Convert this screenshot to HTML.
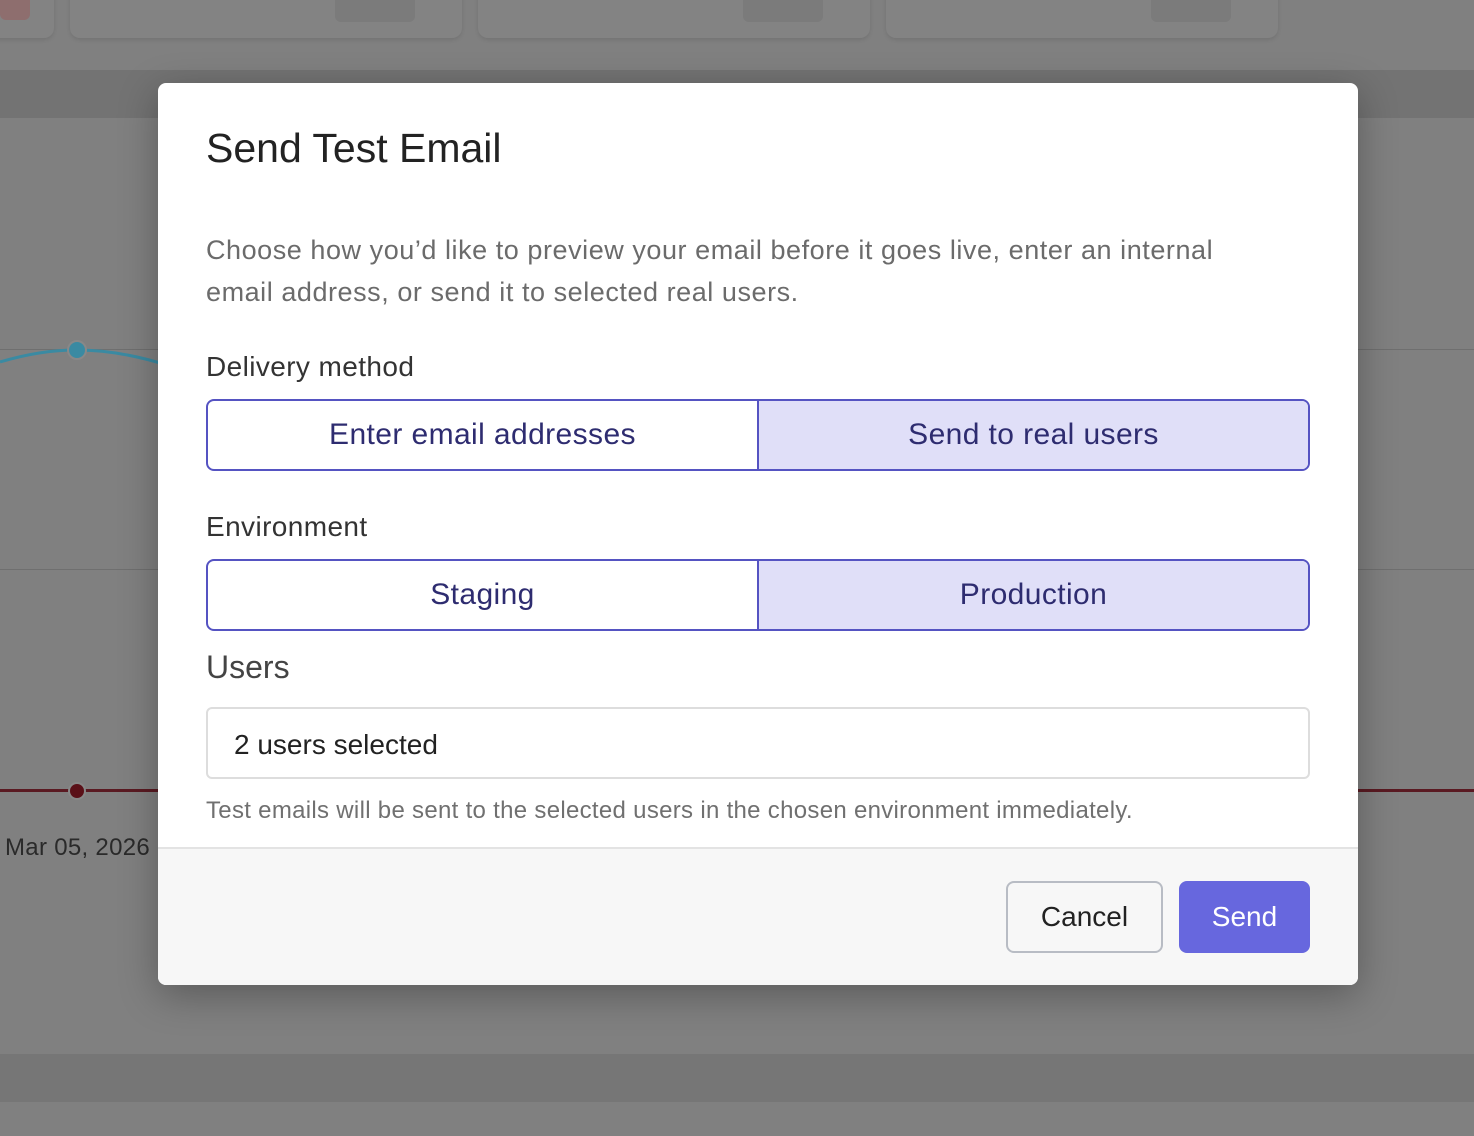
<!DOCTYPE html>
<html><head><meta charset="utf-8"><style>
*{box-sizing:border-box;margin:0;padding:0}
body{width:1474px;height:1136px;overflow:hidden;background:#808080;font-family:"Liberation Sans","DejaVu Sans",sans-serif;position:relative}
.abs{position:absolute}
.card{position:absolute;top:-20px;height:58px;border-radius:10px;background:#838383;box-shadow:0 2px 4px rgba(0,0,0,.1)}
.modal{position:absolute;left:158px;top:83px;width:1200px;height:902px;background:#fff;border-radius:8px;overflow:hidden;box-shadow:0 10px 40px rgba(0,0,0,.3)}
.t{position:absolute;left:48px}
.seg{position:absolute;left:48px;width:1104px;height:72px;border:2px solid #5553c2;border-radius:8px;display:flex;overflow:hidden}
.seg div{flex:1;display:flex;align-items:center;justify-content:center;color:#2e2c70;font-size:30px;letter-spacing:0.4px}
.seg div+div{background:#e0dff8;border-left:2px solid #5553c2}
</style></head><body>
<div class="card" style="left:-30px;width:84px"></div>
<div class="abs" style="left:0;top:-20px;width:30px;height:40px;background:#8e6e6e;border-radius:6px"></div>
<div class="card" style="left:70px;width:392px"></div>
<div class="card" style="left:478px;width:392px"></div>
<div class="card" style="left:886px;width:392px"></div>
<div class="abs" style="left:335px;top:-10px;width:80px;height:32px;background:#7b7b7b;border-radius:6px"></div>
<div class="abs" style="left:743px;top:-10px;width:80px;height:32px;background:#7b7b7b;border-radius:6px"></div>
<div class="abs" style="left:1151px;top:-10px;width:80px;height:32px;background:#7b7b7b;border-radius:6px"></div>
<div class="abs" style="left:0;top:70px;width:1474px;height:48px;background:#737373"></div>
<div class="abs" style="left:0;top:349px;width:1474px;height:1px;background:#6f6f6f"></div>
<div class="abs" style="left:0;top:569px;width:1474px;height:1px;background:#6f6f6f"></div>
<div class="abs" style="left:0;top:789px;width:1474px;height:3px;background:#5a1a22"></div>
<div class="abs" style="left:68px;top:782px;width:18px;height:18px;border-radius:50%;background:#5a1018;border:2px solid #888"></div>
<svg class="abs" style="left:0;top:330px" width="170" height="40"><path d="M0 32 Q40 20 77 20 Q120 20 170 36" stroke="#3a8aa2" stroke-width="3" fill="none"/><circle cx="77" cy="20" r="9" fill="#3a8aa2" stroke="#888" stroke-width="2"/></svg>
<div class="abs" style="left:5px;top:834px;font-size:24px;color:#2a2a2a;letter-spacing:0.3px">Mar 05, 2026</div>
<div class="abs" style="left:0;top:1054px;width:1474px;height:48px;background:#767676"></div>
<div class="modal">
<div class="t" style="top:42px;font-size:41px;color:#222">Send Test Email</div>
<div class="t" style="top:146px;font-size:27px;line-height:42px;color:#6b6b6b;width:1070px;letter-spacing:0.55px">Choose how you’d like to preview your email before it goes live, enter an internal email address, or send it to selected real users.</div>
<div class="t" style="top:268px;font-size:28px;color:#333;letter-spacing:0.4px">Delivery method</div>
<div class="seg" style="top:316px"><div>Enter email addresses</div><div>Send to real users</div></div>
<div class="t" style="top:428px;font-size:28px;color:#333;letter-spacing:0.4px">Environment</div>
<div class="seg" style="top:476px"><div>Staging</div><div>Production</div></div>
<div class="t" style="top:566px;font-size:32px;color:#444">Users</div>
<div class="t" style="top:624px;width:1104px;height:72px;border:2px solid #ddd;border-radius:6px;padding-left:26px;line-height:72px;font-size:28px;color:#222">2 users selected</div>
<div class="t" style="top:714px;font-size:24px;color:#707070;letter-spacing:0.3px">Test emails will be sent to the selected users in the chosen environment immediately.</div>
<div class="abs" style="left:0;top:764px;width:1200px;height:138px;background:#f7f7f7;border-top:2px solid #e3e3e3"></div>
<div class="abs" style="left:848px;top:798px;width:157px;height:72px;border:2px solid #b8bcc4;border-radius:8px;font-size:28px;color:#222;display:flex;align-items:center;justify-content:center">Cancel</div>
<div class="abs" style="left:1021px;top:798px;width:131px;height:72px;background:#6767de;border-radius:8px;font-size:28px;color:#fff;display:flex;align-items:center;justify-content:center">Send</div>
</div>
</body></html>
